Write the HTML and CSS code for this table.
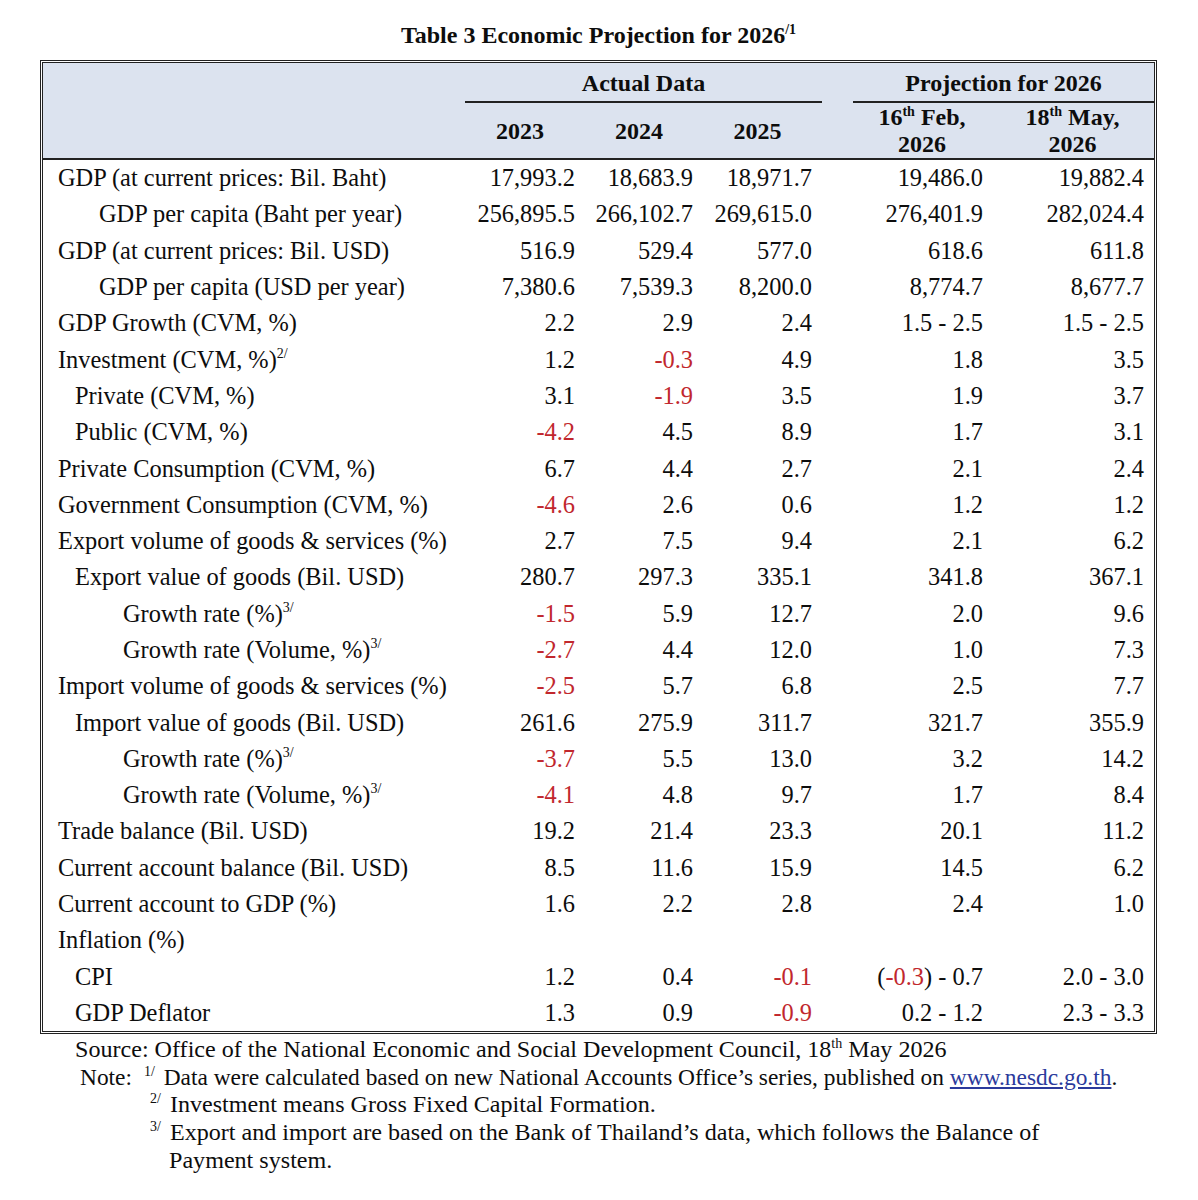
FILE: index.html
```html
<!DOCTYPE html>
<html lang="en">
<head>
    <meta charset="UTF-8">
    <title>Table 3 Economic Projection for 2026</title>
    <link rel="stylesheet" href="styles.css">
</head>
<body>
    <div class="page">
        <h1 class="title">Table 3 Economic Projection for 2026<sup>/1</sup></h1>

        <table class="proj">
            <colgroup>
                <col class="c-label">
                <col class="c-y">
                <col class="c-y2">
                <col class="c-y3">
                <col class="c-gap">
                <col class="c-feb">
                <col class="c-may">
            </colgroup>
            <thead>
                <tr class="h1">
                    <th></th>
                    <th colspan="3" class="group">Actual Data</th>
                    <th></th>
                    <th colspan="2" class="group">Projection for 2026</th>
                </tr>
                <tr class="h2">
                    <th></th>
                    <th class="y1">2023</th>
                    <th class="y2">2024</th>
                    <th class="y3">2025</th>
                    <th></th>
                    <th class="feb">16<sup>th</sup> Feb,<br>2026</th>
                    <th class="may">18<sup>th</sup> May,<br>2026</th>
                </tr>
            </thead>
            <tbody>
                <tr><td class="l0">GDP (at current prices: Bil. Baht)</td><td>17,993.2</td><td>18,683.9</td><td>18,971.7</td><td></td><td class="feb">19,486.0</td><td class="may">19,882.4</td></tr>
                <tr><td class="l2">GDP per capita (Baht per year)</td><td>256,895.5</td><td>266,102.7</td><td>269,615.0</td><td></td><td class="feb">276,401.9</td><td class="may">282,024.4</td></tr>
                <tr><td class="l0">GDP (at current prices: Bil. USD)</td><td>516.9</td><td>529.4</td><td>577.0</td><td></td><td class="feb">618.6</td><td class="may">611.8</td></tr>
                <tr><td class="l2">GDP per capita (USD per year)</td><td>7,380.6</td><td>7,539.3</td><td>8,200.0</td><td></td><td class="feb">8,774.7</td><td class="may">8,677.7</td></tr>
                <tr><td class="l0">GDP Growth (CVM, %)</td><td>2.2</td><td>2.9</td><td>2.4</td><td></td><td class="feb">1.5 - 2.5</td><td class="may">1.5 - 2.5</td></tr>
                <tr><td class="l0">Investment (CVM, %)<sup>2/</sup></td><td>1.2</td><td class="neg">-0.3</td><td>4.9</td><td></td><td class="feb">1.8</td><td class="may">3.5</td></tr>
                <tr><td class="l1">Private (CVM, %)</td><td>3.1</td><td class="neg">-1.9</td><td>3.5</td><td></td><td class="feb">1.9</td><td class="may">3.7</td></tr>
                <tr><td class="l1">Public (CVM, %)</td><td class="neg">-4.2</td><td>4.5</td><td>8.9</td><td></td><td class="feb">1.7</td><td class="may">3.1</td></tr>
                <tr><td class="l0">Private Consumption (CVM, %)</td><td>6.7</td><td>4.4</td><td>2.7</td><td></td><td class="feb">2.1</td><td class="may">2.4</td></tr>
                <tr><td class="l0">Government Consumption (CVM, %)</td><td class="neg">-4.6</td><td>2.6</td><td>0.6</td><td></td><td class="feb">1.2</td><td class="may">1.2</td></tr>
                <tr><td class="l0">Export volume of goods &amp; services (%)</td><td>2.7</td><td>7.5</td><td>9.4</td><td></td><td class="feb">2.1</td><td class="may">6.2</td></tr>
                <tr><td class="l1">Export value of goods (Bil. USD)</td><td>280.7</td><td>297.3</td><td>335.1</td><td></td><td class="feb">341.8</td><td class="may">367.1</td></tr>
                <tr><td class="l3">Growth rate (%)<sup>3/</sup></td><td class="neg">-1.5</td><td>5.9</td><td>12.7</td><td></td><td class="feb">2.0</td><td class="may">9.6</td></tr>
                <tr><td class="l3">Growth rate (Volume, %)<sup>3/</sup></td><td class="neg">-2.7</td><td>4.4</td><td>12.0</td><td></td><td class="feb">1.0</td><td class="may">7.3</td></tr>
                <tr><td class="l0">Import volume of goods &amp; services (%)</td><td class="neg">-2.5</td><td>5.7</td><td>6.8</td><td></td><td class="feb">2.5</td><td class="may">7.7</td></tr>
                <tr><td class="l1">Import value of goods (Bil. USD)</td><td>261.6</td><td>275.9</td><td>311.7</td><td></td><td class="feb">321.7</td><td class="may">355.9</td></tr>
                <tr><td class="l3">Growth rate (%)<sup>3/</sup></td><td class="neg">-3.7</td><td>5.5</td><td>13.0</td><td></td><td class="feb">3.2</td><td class="may">14.2</td></tr>
                <tr><td class="l3">Growth rate (Volume, %)<sup>3/</sup></td><td class="neg">-4.1</td><td>4.8</td><td>9.7</td><td></td><td class="feb">1.7</td><td class="may">8.4</td></tr>
                <tr><td class="l0">Trade balance (Bil. USD)</td><td>19.2</td><td>21.4</td><td>23.3</td><td></td><td class="feb">20.1</td><td class="may">11.2</td></tr>
                <tr><td class="l0">Current account balance (Bil. USD)</td><td>8.5</td><td>11.6</td><td>15.9</td><td></td><td class="feb">14.5</td><td class="may">6.2</td></tr>
                <tr><td class="l0">Current account to GDP (%)</td><td>1.6</td><td>2.2</td><td>2.8</td><td></td><td class="feb">2.4</td><td class="may">1.0</td></tr>
                <tr><td class="l0">Inflation (%)</td><td></td><td></td><td></td><td></td><td class="feb"></td><td class="may"></td></tr>
                <tr><td class="l1">CPI</td><td>1.2</td><td>0.4</td><td class="neg">-0.1</td><td></td><td class="feb">(<span class="neg">-0.3</span>) - 0.7</td><td class="may">2.0 - 3.0</td></tr>
                <tr><td class="l1">GDP Deflator</td><td>1.3</td><td>0.9</td><td class="neg">-0.9</td><td></td><td class="feb">0.2 - 1.2</td><td class="may">2.3 - 3.3</td></tr>
            </tbody>
        </table>

        <div class="notes">
            <p class="source">Source: Office of the National Economic and Social Development Council, 18<sup>th</sup> May 2026</p>
            <p class="note first"><span class="note-lead">Note:</span><sup>1/</sup> Data were calculated based on new National Accounts Office’s series, published on <a href="#">www.nesdc.go.th</a>.</p>
            <p class="note sub"><sup>2/</sup> Investment means Gross Fixed Capital Formation.</p>
            <p class="note sub"><sup>3/</sup> Export and import are based on the Bank of Thailand’s data, which follows the Balance of<br><span class="cont">Payment system.</span></p>
        </div>
    </div>
</body>
</html>
```

FILE: styles.css
```css
* {
    margin: 0;
    padding: 0;
    box-sizing: border-box;
}

body {
    background: #fff;
    color: #0d0d0d;
    font-family: "Liberation Serif", "Times New Roman", serif;
}

.page {
    width: 1198px;
    padding: 21px 0 0 40px;
}

.title {
    width: 1117px;
    text-align: center;
    font-size: 24px;
    font-weight: 700;
    line-height: 28px;
    height: 39px;
}

.title sup {
    font-size: 14px;
    vertical-align: 9px;
    line-height: 0;
}

/* table */
.proj {
    width: 1117px;
    border: 3px double #222;
    border-collapse: separate;
    border-spacing: 0;
    font-size: 24.4px;
    table-layout: fixed;
}

.c-label { width: 422px; }
.c-y { width: 120px; }
.c-y2 { width: 118px; }
.c-y3 { width: 119px; }
.c-gap { width: 31px; }
.c-feb { width: 138px; }
.c-may { width: 163px; }

thead th {
    background: #dce3ef;
    font-weight: 700;
    text-align: center;
    font-size: 24px;
    line-height: 26px;
}

thead sup {
    font-size: 14px;
    vertical-align: 9px;
    line-height: 0;
}

.h1 th {
    height: 40px;
    padding-top: 1px;
}

.h1 .group {
    border-bottom: 2px solid #222;
}

.h2 th {
    height: 57px;
    border-bottom: 2px solid #222;
    line-height: 27px;
}

.h2 .y1, .h2 .y2, .h2 .y3 {
    padding-right: 10px;
    padding-top: 2px;
}

.h2 .feb {
    padding-right: 0;
}

tbody td {
    height: 36.3px;
    line-height: 26px;
    text-align: right;
    padding-right: 10px;
    white-space: nowrap;
}

tbody td.feb {
    padding-right: 8px;
}

tbody td.may {
    padding-right: 10px;
}

tbody td.l0,
tbody td.l1,
tbody td.l2,
tbody td.l3 {
    text-align: left;
    padding-right: 0;
}

.l0 { padding-left: 15px; }
.l1 { padding-left: 32px; }
.l2 { padding-left: 56px; }
.l3 { padding-left: 80px; }

tbody sup {
    font-size: 14px;
    vertical-align: 10px;
    line-height: 0;
}

.neg {
    color: #c1272d;
}

/* footnotes */
.notes {
    padding-top: 2px;
    font-size: 24.1px;
    line-height: 27.6px;
}

.notes sup {
    font-size: 14px;
    vertical-align: 9px;
    line-height: 0;
}

.source {
    padding-left: 35px;
}

.note {
    padding-left: 40px;
}

.note.first {
    font-size: 23.4px;
}

.note-lead {
    margin-right: 12px;
}

.note.sub {
    padding-left: 110px;
}

.note sup {
    margin-right: 3px;
}

.cont {
    padding-left: 19px;
}

.note a {
    color: #2b3a9c;
    text-decoration: underline;
}
```
